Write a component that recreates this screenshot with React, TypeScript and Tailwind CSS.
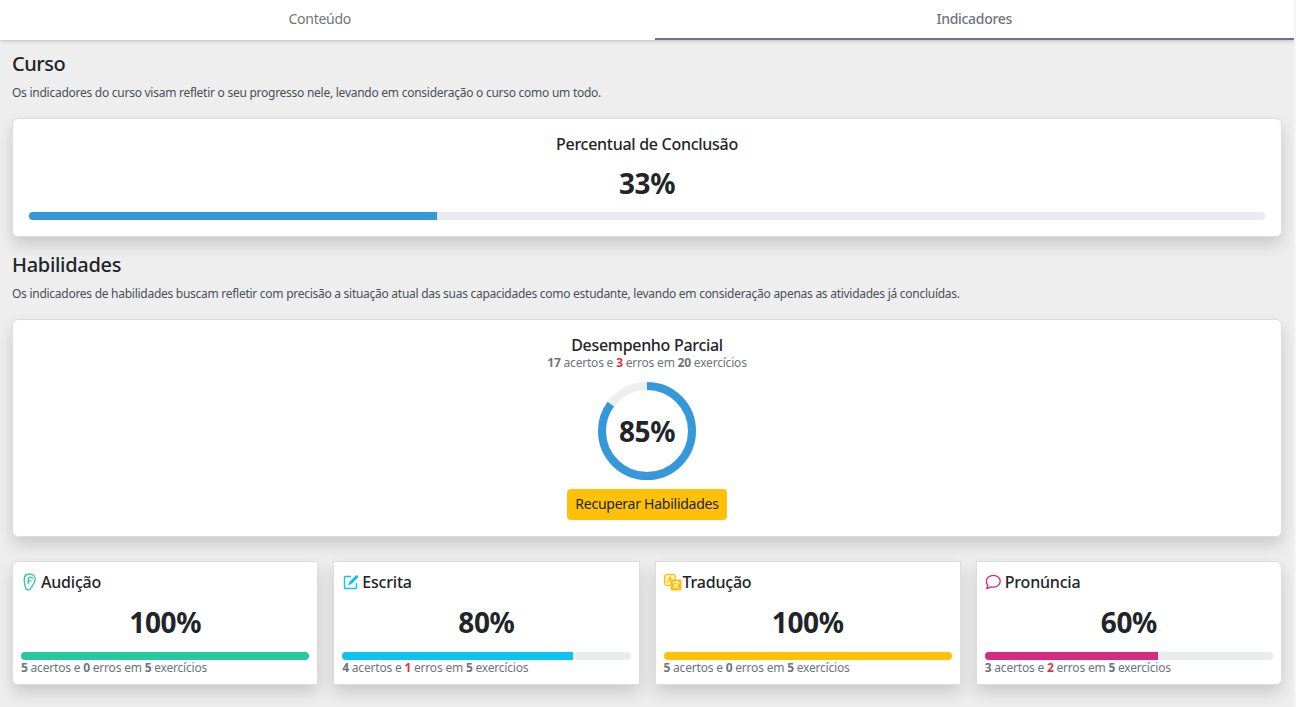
import React from "react";

function EarIcon() {
  return (
    <svg width="14" height="18" viewBox="0 0 14 18" fill="none" stroke="#26c99e" strokeWidth="1.300" strokeLinecap="round" strokeLinejoin="round">
      <path d="M1.200 6.800C1.200 3.300 3.400 1 6.600 1c3.100 0 5.600 2.200 5.600 5.300 0 2.800-1.500 4.300-2.700 6-1 1.500-1.200 4.400-3.800 4.500-2 .1-3.200-1.100-3.500-3.200C1.900 11.400 1.200 9.400 1.200 6.800z" />
      <path d="M5.300 10.500V6.400c0-1.500 1-2.300 2.100-2.300 1 0 1.800.6 2 1.500M5.300 7.900h2.700" />
    </svg>
  );
}

function PenIcon() {
  return (
    <svg width="16" height="16" viewBox="0 0 16 16" fill="none">
      <path d="M13.500 9v4.500a1 1 0 0 1-1 1h-10a1 1 0 0 1-1-1v-10a1 1 0 0 1 1-1H8" stroke="#0dc3ef" strokeWidth="1.400" />
      <path d="M5.200 11.200l.8-3L12.700 1.500a1.100 1.100 0 0 1 1.600 0l.5.500a1.100 1.100 0 0 1 0 1.600L8.200 10.300z" fill="#0dc3ef" />
    </svg>
  );
}

function TranslateIcon() {
  return (
    <svg width="18" height="17" viewBox="0 0 18 17" fill="none" strokeLinecap="round" strokeLinejoin="round">
      <rect x="0.700" y="0.700" width="10.600" height="10.600" rx="1.600" fill="#fff3cd" stroke="#ffc107" strokeWidth="1.300" />
      <path d="M3.600 8.300L6 2.800l2.400 5.500M4.500 6.500h3" stroke="#ffc107" strokeWidth="1.200" />
      <rect x="6.500" y="5.500" width="11" height="11" rx="1.600" fill="#ffc107" />
      <path d="M9.200 8.300h6M12.200 7.400v.9M14.300 8.300c-.5 2.200-2.400 4.300-4.700 5.300M10.300 10.200c.8 1.500 2.400 2.800 4.300 3.500" stroke="#fff" strokeWidth="1.100" />
    </svg>
  );
}

function ChatIcon() {
  return (
    <svg width="16" height="16" viewBox="0 0 16 16" fill="none" stroke="#d62b7f" strokeWidth="1.300" strokeLinejoin="round">
      <path d="M8.300 1.300c3.700 0 6.900 2.600 6.900 6 0 3.300-3.200 5.900-6.900 5.900-.9 0-1.800-.2-2.600-.4-1 .9-2.300 1.500-4.100 1.700.7-1 1.200-2 1.200-3.200C1.900 10.200 1.400 8.800 1.400 7.300c0-3.400 3.200-6 6.900-6z" />
    </svg>
  );
}

const stats = [
  { name: "Audição", icon: <EarIcon />, pct: 100, a: 5, e: 0, color: "bg-[#26c99e]", corner: "rounded-l-md", gap: "gap-[4px]", pad: "pl-[2px]" },
  { name: "Escrita", icon: <PenIcon />, pct: 80, a: 4, e: 1, color: "bg-[#0dc3ef]", corner: "", gap: "gap-[3px]", pad: "pl-[1px]" },
  { name: "Tradução", icon: <TranslateIcon />, pct: 100, a: 5, e: 0, color: "bg-[#ffc107]", corner: "", gap: "gap-[1px]", pad: "" },
  { name: "Pronúncia", icon: <ChatIcon />, pct: 60, a: 3, e: 2, color: "bg-[#d62b7f]", corner: "rounded-r-md", gap: "gap-[4px]", pad: "" },
];

function Ring() {
  const r = 45;
  const c = 2 * Math.PI * r;
  return (
    <svg width="98" height="98" viewBox="0 0 98 98" className="block">
      <circle cx="49" cy="49" r={r} fill="none" stroke="#eeeeee" strokeWidth="8" />
      <circle cx="49" cy="49" r={r} fill="none" stroke="#3498db" strokeWidth="8" strokeDasharray={`${c * 0.85} ${c}`} transform="rotate(-90 49 49)" />
    </svg>
  );
}

export default function App() {
  return (
    <div className="flex h-[707px] overflow-hidden bg-[#eeeeee] font-['Noto_Sans',sans-serif] text-[#212529]">
      <div className="min-w-0 flex-1">
        <nav className="flex h-10 gap-[15px] bg-white shadow-[0_1px_4px_rgba(0,0,0,0.2)]">
          <div className="flex flex-1 items-center justify-center border-b-2 border-transparent pb-[1px] text-[14px] tracking-[-0.25px] text-[#6c757d]">Conteúdo</div>
          <div className="flex flex-1 items-center justify-center border-b-2 border-[#6c757d] pb-[1px] text-[14px] font-medium tracking-[-0.3px] text-[#6c757d]">Indicadores</div>
        </nav>
        <main className="px-3">
          <h2 className="mt-3 text-[20px] leading-6 font-medium tracking-[-0.5px]">Curso</h2>
          <p className="mt-[8px] text-[12px] leading-[18px] tracking-[-0.26px] text-[#495057]">
            Os indicadores do curso visam refletir o seu progresso nele, levando em consideração o curso como um todo.
          </p>
          <section className="mt-[16px] flex h-[119px] flex-col items-center rounded-md border border-[#dddddd] bg-white px-4 shadow-[0_8px_16px_rgba(0,0,0,0.15)]">
            <h3 className="mt-[13px] text-[16px] leading-6 font-medium tracking-[-0.28px]">Percentual de Conclusão</h3>
            <div className="mt-[7px] text-[28px] leading-[40px] font-bold tracking-[-0.4px]">33%</div>
            <div className="mt-[9px] h-2 w-full overflow-hidden rounded-full bg-[#e9ecef]">
              <div className="h-full w-[33%] bg-[#3498db]" />
            </div>
          </section>

          <h2 className="mt-[16px] text-[20px] leading-6 font-medium tracking-[-0.3px]">Habilidades</h2>
          <p className="mt-[8px] text-[12px] leading-[18px] tracking-[-0.27px] text-[#495057]">
            Os indicadores de habilidades buscam refletir com precisão a situação atual das suas capacidades como estudante, levando em consideração apenas as atividades já concluídas.
          </p>
          <section className="mt-[16px] flex h-[218px] flex-col items-center rounded-md border border-[#dddddd] bg-white shadow-[0_8px_16px_rgba(0,0,0,0.15)]">
            <h3 className="mt-[14px] text-[16px] leading-[22px] font-medium tracking-[-0.3px]">Desempenho Parcial</h3>
            <p className="text-[12px] leading-[14px] tracking-[-0.2px] text-[#6c757d]">
              <b className="font-bold">17</b> acertos e <b className="font-bold text-[#dc3545]">3</b> erros em <b className="font-bold">20</b> exercícios
            </p>
            <div className="relative mt-[12px]">
              <Ring />
              <div className="absolute inset-0 flex items-center justify-center text-[28px] font-bold tracking-[-0.4px]">85%</div>
            </div>
            <button className="mt-[9px] h-[31px] w-[160px] rounded bg-[#ffc107] pb-[2px] text-[14px] tracking-[-0.25px] text-[#212529]">Recuperar Habilidades</button>
          </section>

          <div className="mt-6 grid grid-cols-4 gap-[15px]">
            {stats.map((s) => (
              <article key={s.name} className={`h-[124px] border border-[#dddddd] bg-white px-2 shadow-[0_8px_16px_rgba(0,0,0,0.15)] ${s.corner}`}>
                <div className={`mt-[8px] flex h-6 items-center ${s.gap} ${s.pad}`}>
                  {s.icon}
                  <span className="text-[16px] leading-6 font-medium tracking-[-0.2px]">{s.name}</span>
                </div>
                <div className="mt-[8px] text-center text-[28px] leading-[40px] font-bold tracking-[-0.4px]">{s.pct}%</div>
                <div className="mt-[10px] h-2 overflow-hidden rounded-full bg-[#e9ecef]">
                  <div className={`h-full ${s.color}`} style={{ width: `${s.pct}%` }} />
                </div>
                <p className="mt-[1px] text-[12px] leading-[14px] tracking-[-0.2px] text-[#6c757d]">
                  <b className="font-bold">{s.a}</b> acertos e <b className={s.e > 0 ? "font-bold text-[#dc3545]" : "font-bold"}>{s.e}</b> erros em <b className="font-bold">5</b> exercícios
                </p>
              </article>
            ))}
          </div>
        </main>
      </div>
      <div className="w-[2px] bg-[#f5f5f5]" />
    </div>
  );
}
